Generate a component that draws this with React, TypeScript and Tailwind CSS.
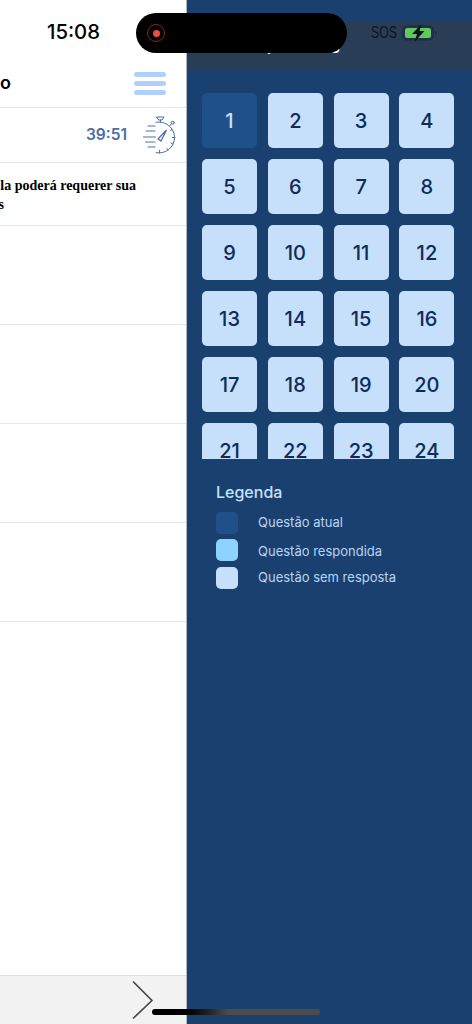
// Prova screen with the question drawer pulled open over it.
const sans = "font-['Inter','Liberation_Sans',sans-serif]";

const questions = Array.from({ length: 24 }, (_, i) => i + 1);

const legend = [
  { label: "Questão atual", color: "bg-[#20508a]", row: "h-[22px] mt-[8px]", text: "" },
  { label: "Questão respondida", color: "bg-[#8dd3fd]", row: "h-[22px] mt-[5px]", text: "mt-[4px]" },
  { label: "Questão sem resposta", color: "bg-[#c6e0fc]", row: "h-[22px] mt-[6px]", text: "" },
];

function StopwatchIcon() {
  return (
    <svg width="33" height="38" viewBox="0 -1 33 38" fill="none" stroke="#4c6ea5" strokeWidth="1" strokeLinecap="round">
      <path d="M13 5.300a15.500 15.500 0 1 1 0 30.400" />
      <path d="M14 0h7l-2 3h-3z" />
      <path d="M17.500 3v2" />
      <path d="M26.500 9l2-2" />
      <circle cx="29.700" cy="5.700" r="1.500" />
      <path d="M5 9h7M3 14h9M0.500 20h12M2.500 25h9.500M5 30h7" />
      <path d="M15 22l8.500-9-5.500 11z" strokeWidth="1.200" />
      <path d="M16.500 36v-2.500M25 33l-1-1.500M30 27l-2-1M32 20.500h-2.500M29 12.500l-1.500 1" />
    </svg>
  );
}

function OptionRow() {
  return <div className="h-[99px] border-b border-[#e6e6e6]" />;
}

function BehindPanel() {
  return (
    <div className={`flex h-full w-[187px] shrink-0 flex-col overflow-hidden bg-white ${sans}`}>
      <div className="h-[60px] pt-[18px] pl-[47px] text-[20.300px] font-medium leading-[28px] text-black">15:08</div>
      <div className="flex h-[48px] items-center justify-between border-b border-[#e6e6e6] pb-[1px] pr-[21px]">
        <span className="text-[18px] leading-none font-semibold text-black">o</span>
        <div className="flex w-[32px] flex-col gap-[4px] pt-[1px]">
          <div className="h-[5px] rounded-full bg-[#aed0fa]" />
          <div className="h-[5px] rounded-full bg-[#aed0fa]" />
          <div className="h-[5px] rounded-full bg-[#aed0fa]" />
        </div>
      </div>
      <div className="flex h-[55px] items-center justify-end gap-[16px] border-b border-[#e6e6e6] pr-[11px]">
        <span className="text-[15.500px] font-semibold text-[#4c6ea5]">39:51</span>
        <StopwatchIcon />
      </div>
      <div className="h-[63px] overflow-hidden border-b border-[#e6e6e6] pt-[13px] font-['Liberation_Serif',serif] text-[14px] leading-[19px] font-bold text-black">
        <p className="flex justify-end whitespace-nowrap pr-[51px]">Ela poderá requerer sua</p>
        <p className="flex w-[4px] justify-end">s</p>
      </div>
      <OptionRow />
      <OptionRow />
      <OptionRow />
      <OptionRow />
      <div className="flex-1" />
      <div className="flex h-[49px] items-center justify-end border-t border-[#dedede] bg-[#f2f2f2] pr-[33px]">
        <svg width="22" height="38" viewBox="0 0 22 38" fill="none" stroke="#444444" strokeWidth="1.700" strokeLinecap="round" strokeLinejoin="round">
          <path d="M1.500 1 20 19.500 1.500 37" />
        </svg>
      </div>
    </div>
  );
}

function QuestionDrawer() {
  return (
    <aside className={`flex h-full flex-1 flex-col bg-[#1a4070] shadow-[-1px_0_0_#aeb6c0] ${sans}`}>
      <div className="mt-[22px] h-[48px] bg-[#2a3d57] pl-[71px] pt-[14px] text-[18px] font-medium leading-[22px] text-white">
        Questões
      </div>
      <div className="mt-[23px] grid h-[366px] grid-cols-[repeat(4,55px)] content-start gap-x-[10.800px] gap-y-[11px] overflow-hidden pl-[15px]">
        {questions.map((n) => (
          <div
            key={n}
            className={`flex h-[55px] w-[55px] items-center justify-center rounded-[5px] text-[20px] font-medium ${
              n === 1 ? "bg-[#20508a] text-[#c6e0fc]" : "bg-[#c6e0fc] text-[#0f2b59]"
            }`}
          >
            {n}
          </div>
        ))}
      </div>
      <div className="pl-[29px] pt-[21px]">
        <h3 className="text-[16px] font-medium leading-[24px] text-[#c6e0fc]">Legenda</h3>
        {legend.map((item) => (
          <div key={item.label} className={`flex items-center ${item.row}`}>
            <span className={`h-[22px] w-[22px] rounded-[5px] ${item.color}`} />
            <span className={`ml-[20px] text-[13px] text-[#b9d4f3] ${item.text}`}>{item.label}</span>
          </div>
        ))}
      </div>
    </aside>
  );
}

export default function App() {
  return (
    <div className="relative flex h-[1024px] w-[472px] overflow-hidden">
      <BehindPanel />
      <QuestionDrawer />

      {/* dynamic island, status icons and home bar sit over both panels */}
      <div className="absolute left-[136px] top-[13px] flex h-[40px] w-[211px] items-center rounded-[20px] bg-black pl-[11px]">
        <span className="flex h-[18px] w-[18px] items-center justify-center rounded-full border border-[#7c2a22]">
          <span className="h-[7px] w-[7px] rounded-full bg-[#ef4d3f]" />
        </span>
      </div>
      <div className="absolute left-[371px] top-[23px] flex items-center gap-[7px]">
        <span className="w-[24px] origin-left font-['Liberation_Sans',sans-serif] text-[17px] leading-[20px] text-[#0d1420] [transform:scaleX(0.72)]">SOS</span>
        <svg width="36" height="18" viewBox="0 0 36 18">
          <rect x="0.500" y="2" width="31" height="14" rx="4.500" fill="#25344a" stroke="#1c2a3f" />
          <rect x="3" y="4" width="26" height="10" rx="2.500" fill="#62c85f" />
          <path d="M33 7v4c1 0 1.500-1 1.500-2s-.5-2-1.500-2z" fill="#1c2a3f" />
          <path d="M19.500 0 10 10h5l-2.500 8 10-11h-5z" fill="#0b1220" />
        </svg>
      </div>
      <div className="absolute left-[152px] top-[1009px] h-[6px] w-[168px] rounded-full bg-gradient-to-r from-black from-[15%] to-[#4b4b4b] to-[45%]" />
    </div>
  );
}
